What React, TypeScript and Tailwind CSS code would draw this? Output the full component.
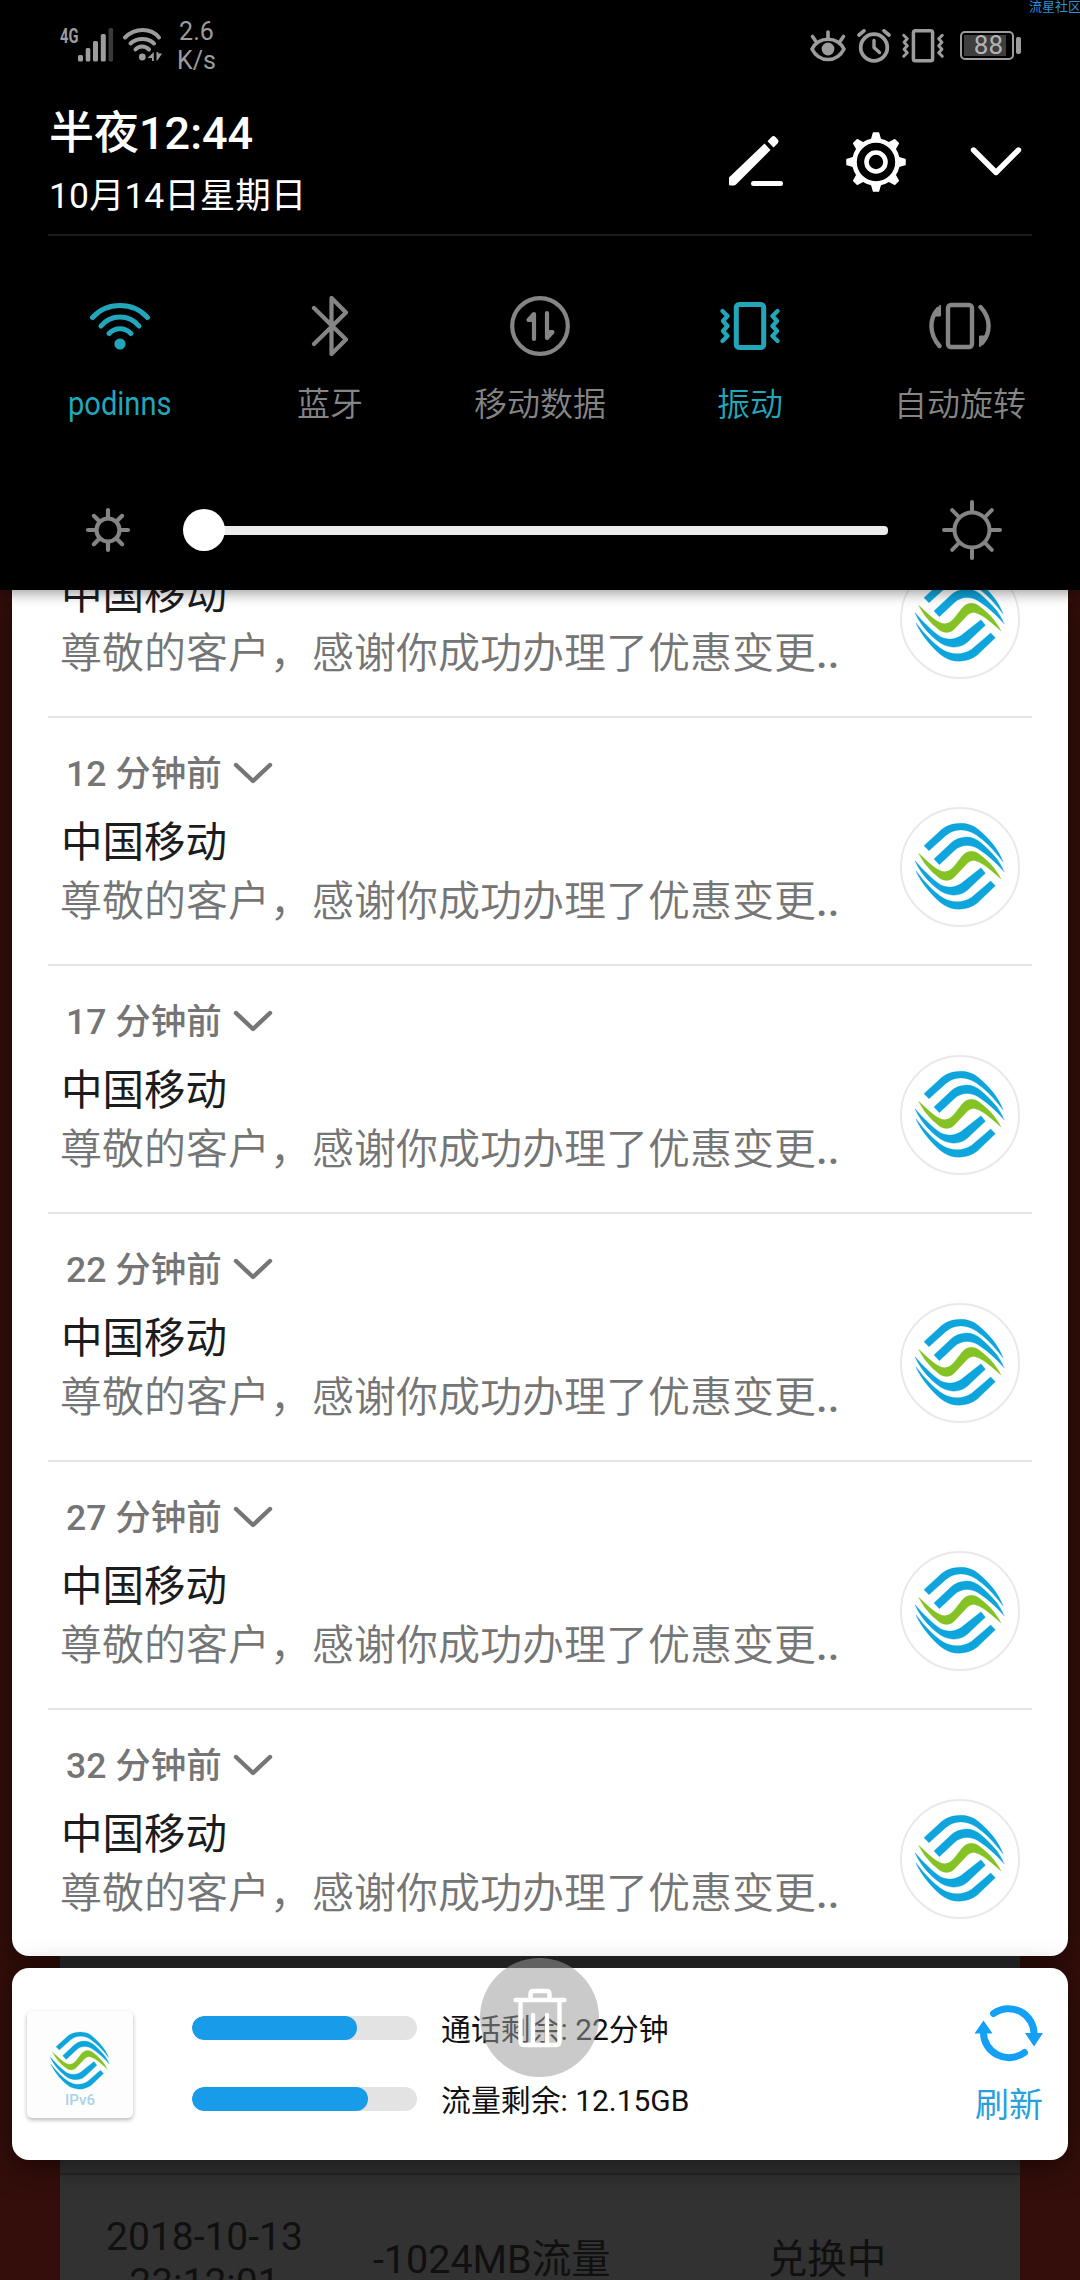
// src/App.tsx
import React from 'react'

const Logo = ({ className }: { className?: string }) => (
  <svg viewBox="30 37 360 360" className={className} strokeWidth="1" strokeLinejoin="round" aria-hidden="true">
    <g fill="#0ea5dc" stroke="#0ea5dc">
      <path d="M102 153 L150 109 C178 82 232 77 264 104 C298 132 327 166 339 202 C312 165 284 138 258 120 C227 100 190 101 166 124 L117 168 Z" />
      <path d="M132 193 L182 146 C208 122 246 120 274 145 C306 174 330 198 342 231 C315 200 290 179 264 162 C240 148 215 149 195 166 L148 210 Z" />
      <path d="M75 198 C98 224 122 249 149 269 C170 281 196 279 214 266 L273 219 L286 236 L232 287 C204 309 168 305 140 281 C110 256 88 228 75 198 Z" />
      <path d="M78 229 C102 260 130 291 160 310 C188 326 220 325 245 308 L302 259 L316 273 L262 325 C230 350 184 350 152 324 C120 297 92 262 78 229 Z" />
    </g>
    <path
      d="M86 176 C112 200 134 222 155 230 C168 234 180 228 190 218 L215 186 C230 167 250 165 267 178 C294 198 318 222 333 253 C305 228 285 210 264 201 C252 195 242 197 232 206 L197 243 C181 261 163 261 147 249 C124 232 102 208 86 176 Z"
      fill="#84c225"
      stroke="#84c225"
    />
  </svg>
)

const Vibrate = ({ className }: { className: string }) => (
  <svg viewBox="0 0 60 48" className={className} fill="none" stroke="currentColor" strokeLinecap="round" strokeLinejoin="round" aria-hidden="true">
    <rect x="16.300" y="2.500" width="27.400" height="43" rx="3" strokeWidth="5" />
    <path d="M2.500 9 7.500 14 3 19 7.500 24 3 29 7.500 34 2.500 39" strokeWidth="4.200" />
    <path d="M57.500 9 52.500 14 57 19 52.500 24 57 29 52.500 34 57.500 39" strokeWidth="4.200" />
  </svg>
)

const angles = [0, 45, 90, 135, 180, 225, 270, 315]

const Sun = ({ className, r, from, to, stroke }: { className: string; r: number; from: number; to: number; stroke: number }) => (
  <svg viewBox="-32 -32 64 64" className={className} fill="none" stroke="currentColor" strokeWidth={stroke} strokeLinecap="round" aria-hidden="true">
    <circle r={r} />
    {angles.map((a) => (
      <path key={a} d={`M0 ${-from}V${-to}`} transform={`rotate(${a})`} />
    ))}
  </svg>
)

const StatusBar = () => (
  <div className="flex h-[92px] items-start text-[#9c9c9c]">
    <div className="ml-[60px] mt-[24px] w-[20px] origin-left scale-x-[.7] text-[21px] font-bold leading-[24px]">4G</div>
    <svg className="ml-[-2px] mt-[28px] h-[34px] w-[36px]" viewBox="0 0 36 34" fill="currentColor" aria-hidden="true">
      <rect x="0" y="27" width="5" height="6.5" rx="1.5" />
      <rect x="7.7" y="20" width="4.6" height="13.5" rx="1.5" />
      <rect x="15" y="13" width="5" height="20.5" rx="1.5" />
      <rect x="22.8" y="6" width="5" height="27.5" rx="1.5" />
      <rect x="30.5" y="0" width="4.6" height="33.5" rx="1.5" fill="#3a3a3a" />
    </svg>
    <svg className="ml-[8px] mt-[28px] h-[34px] w-[42px]" viewBox="0 0 42 34" fill="none" stroke="currentColor" strokeWidth="4" strokeLinecap="round" aria-hidden="true">
      <path d="M3 9.5C13 -.5 29 -.5 37 9.5" />
      <path d="M8.5 15.5C15 9.5 26 9.5 32 15.5" />
      <path d="M13.5 21.5C17 17.5 23 17.5 27 21.5" />
      <circle cx="20.3" cy="29" r="3.4" fill="currentColor" stroke="none" />
      <path d="M31.8 24v9h-1.8v-3h-4.5zM34.5 24v9l1.6-1.5 4-6h-3.8v-1.5z" fill="currentColor" stroke="none" />
    </svg>
    <div className="ml-[13px] mt-[18px] text-center text-[25px] leading-[28.5px]">
      <div>2.6</div>
      <div>K/s</div>
    </div>

    <div className="ml-auto mr-[59px] mt-[29px] flex items-start">
      {/* eye comfort */}
      <svg className="h-[34px] w-[38px]" viewBox="0 0 38 34" fill="none" stroke="currentColor" strokeWidth="3.6" strokeLinecap="round" aria-hidden="true">
        <path d="M3 20C10 7 28 7 35 20C28 34 10 34 3 20Z" />
        <circle cx="19" cy="20" r="6.4" fill="currentColor" stroke="none" />
        <path d="M19 3V9M3.5 7.5 7 12.5M34.5 7.5 31 12.5" />
      </svg>
      {/* alarm */}
      <svg className="ml-[10px] h-[34px] w-[34px]" viewBox="0 0 34 34" fill="none" stroke="currentColor" strokeLinecap="round" aria-hidden="true">
        <circle cx="17" cy="18.5" r="13.3" strokeWidth="3.8" />
        <path d="M17 11.5V18.5L22.5 23.5" strokeWidth="3.4" />
        <path d="M2 6 7 1.8M32 6 27 1.8" strokeWidth="3.6" />
      </svg>
      <Vibrate className="ml-[11px] h-[33.6px] w-[42px]" />
      <div className="ml-[16px] mt-[2px] flex h-[29px] w-[54px] items-center rounded-[5px] border-2 border-current p-[2px]">
        <div className="flex h-[21px] w-[42px] items-center justify-end bg-[#3e3e3e] pr-[3px] text-[26px] leading-[21px] text-[#b4b4b4]">
          <span>88</span>
        </div>
      </div>
      <div className="ml-[2px] mt-[8px] h-[17px] w-[5px] rounded-[2px] bg-current" />
    </div>
  </div>
)

const ClockRow = () => (
  <div className="mx-[48px] flex h-[144px] border-b-2 border-[#1c1c1c] text-white">
    <div className="pt-[11px]">
      <div className="pl-[1px] text-[45px] font-medium leading-[62px]">半夜12:44</div>
      <div className="mt-[5px] pl-[1px] text-[35.500px] leading-[52px]">10月14日星期日</div>
    </div>
    <div className="ml-auto mr-[9px] mt-[38px] flex items-start">
      <svg className="mt-[5px] h-[54px] w-[56px]" viewBox="0 0 56 54" aria-hidden="true" fill="currentColor">
        <path d="M1 42.5 36.5 8.5 42.5 15 8 49.5Q7 50.5 5.500 50.500H2.500Q1 50.500 1 49Z" />
        <path d="M39.500 6.200 43.500 2Q45.500 0 47.500 2L49.800 4.500Q51.500 6.300 49.800 8.300L45.500 12.500Z" />
        <rect x="23" y="46" width="32" height="5" rx="2.500" />
      </svg>
      <svg className="ml-[61px] h-[64px] w-[62px]" viewBox="-31 -31 62 62" aria-hidden="true" fill="none" stroke="currentColor">
        <circle r="21.500" strokeWidth="4.600" />
        <circle r="9.500" strokeWidth="4.600" />
        {angles.map((a) => (
          <path key={a} d="M-4.500 -22 -2.500 -29H2.500L4.500 -22Z" fill="currentColor" strokeWidth="1.500" strokeLinejoin="round" transform={`rotate(${a})`} />
        ))}
      </svg>
      <svg className="ml-[62px] mt-[16px] h-[32px] w-[54px]" viewBox="0 0 54 32" aria-hidden="true" fill="none" stroke="currentColor" strokeWidth="5.400" strokeLinecap="round" strokeLinejoin="round">
        <path d="M4.500 4 27 26.500 49.500 4" />
      </svg>
    </div>
  </div>
)

const toggles = [
  {
    label: 'podinns',
    on: true,
    latin: true,
    icon: (
      <svg className="h-[60px] w-[62px]" viewBox="0 0 62 60" fill="none" stroke="currentColor" strokeWidth="5" strokeLinecap="round" aria-hidden="true">
        <path d="M3.500 21.500C18 5.500 44 5.500 58.500 21.500" />
        <path d="M12 30C22 18 40 18 50 30" />
        <path d="M20 37.500C26 31 36 31 42 37.500" />
        <circle cx="31" cy="48" r="5.600" fill="currentColor" stroke="none" />
      </svg>
    ),
  },
  {
    label: '蓝牙',
    icon: (
      <svg className="h-[60px] w-[60px]" viewBox="0 0 60 60" fill="none" stroke="currentColor" strokeWidth="4.200" strokeLinecap="round" strokeLinejoin="round" aria-hidden="true">
        <path d="M14 12 46 43.500 31.500 58V2L46 16.500 14 48" />
      </svg>
    ),
  },
  {
    label: '移动数据',
    icon: (
      <svg className="h-[60px] w-[60px]" viewBox="0 0 60 60" fill="none" stroke="currentColor" strokeWidth="4.200" strokeLinecap="round" strokeLinejoin="round" aria-hidden="true">
        <circle cx="30" cy="30" r="27.800" />
        <path d="M24 43V18L18.500 24H24M37 17V42L42.500 36H37" />
      </svg>
    ),
  },
  {
    label: '振动',
    on: true,
    icon: <Vibrate className="h-[48px] w-[60px]" />,
  },
  {
    label: '自动旋转',
    icon: (
      <svg className="h-[48px] w-[62px]" viewBox="0 0 62 48" fill="none" stroke="currentColor" strokeWidth="4.400" strokeLinecap="round" strokeLinejoin="round" aria-hidden="true">
        <rect x="19" y="3" width="24" height="42" rx="3" />
        <path d="M10.500 44C0 32 0 17 9 7M51.500 5C62 16 62 31 53 41" />
        <path d="M11 4V13.500H6.500ZM51 44V34.500H55.500Z" fill="currentColor" strokeWidth="2" />
      </svg>
    ),
  },
]

const QuickToggles = () => (
  <div className="mx-[15px] grid h-[244px] grid-cols-5 pt-[60px]">
    {toggles.map((t) => (
      <div key={t.label} className={t.on ? 'flex flex-col items-center text-[#22a7ba]' : 'flex flex-col items-center text-[#858585]'}>
        <div className="flex h-[60px] items-center">{t.icon}</div>
        <div
          className={
            t.latin
              ? 'mt-[24px] scale-x-[.88] text-[33px] font-[450] leading-[48px]'
              : 'mt-[25px] whitespace-nowrap text-[33px] font-[350] leading-[48px]'
          }
        >
          {t.label}
        </div>
      </div>
    ))}
  </div>
)

const Brightness = () => (
  <div className="flex h-[100px] items-center text-[#858585]">
    <Sun className="ml-[76px] h-[64px] w-[64px]" r={11.500} from={13} to={20} stroke={4.200} />
    <div className="ml-[43px] flex w-[705px] items-center">
      <div className="z-10 h-[42px] w-[42px] rounded-full bg-white" />
      <div className="ml-[-6px] h-[9px] flex-1 rounded-r-[4px] bg-[#ececec]" />
    </div>
    <Sun className="ml-[52px] h-[64px] w-[64px]" r={17.500} from={19} to={28} stroke={4} />
  </div>
)

const NotificationRow = ({ ago, last, first }: { ago: string; last?: boolean; first?: boolean }) => (
  <article
    className={[
      'mx-[36px] flex shrink-0 justify-between',
      last ? 'h-[246px]' : 'h-[248px] border-b-2 border-[#e4e4e4]',
      first ? 'mt-[-120px]' : '',
    ].join(' ')}
  >
    <div className="pl-[12px]">
      <div className="mt-[32px] flex h-[48px] items-center pl-[6px] text-[35.500px] font-medium leading-[48px] text-[#757575]">
        <span>{ago}</span>
        <svg className="ml-[11px] mt-[-2px] h-[22px] w-[40px]" viewBox="0 0 40 22" fill="none" stroke="currentColor" strokeWidth="4.400" strokeLinecap="round" strokeLinejoin="round" aria-hidden="true">
          <path d="M3 3 20 19 37 3" />
        </svg>
      </div>
      <div className="mt-[15px] h-[60px] pl-[1px] text-[41.500px] leading-[60px] text-[#1c1c1c]">中国移动</div>
      <div className="mt-[-1px] h-[60px] whitespace-nowrap text-[42px] font-[350] leading-[60px] text-[#757575]">
        尊敬的客户，感谢你成功办理了优惠变更<span className="font-medium">..</span>
      </div>
    </div>
    <div className="mr-[12px] mt-[89px] h-[120px] w-[120px] shrink-0 overflow-hidden rounded-full border-2 border-[#e9e9e9] bg-white">
      <Logo className="m-[-2px] h-[120px] w-[120px] max-w-none" />
    </div>
  </article>
)

const agoList = ['7 分钟前', '12 分钟前', '17 分钟前', '22 分钟前', '27 分钟前', '32 分钟前']

const usage = [
  { label: '通话剩余: 22分钟', value: 73.3 },
  { label: '流量剩余: 12.15GB', value: 78.2 },
]

const UsageCard = () => (
  <section className="mx-[12px] mt-[12px] flex h-[192px] rounded-[17px] bg-white shadow-[0_6px_30px_rgba(0,0,0,.5)]">
    <div className="ml-[15px] mt-[43px] flex h-[107px] w-[106px] flex-col items-center rounded-[5px] bg-[#fdfdfd] shadow-[0_2px_4px_rgba(0,0,0,.28)]">
      <Logo className="mt-[10px] h-[80px] w-[80px]" />
      <div className="mt-[-9px] text-[15px] font-medium leading-[16px] text-[#a9d2e6]">IPv6</div>
    </div>
    <div className="ml-[59px] mt-[38px]">
      {usage.map((u) => (
        <div key={u.label} className="mb-[23px] flex h-[48px]">
          <div className="mt-[10px] h-[24px] w-[225px] overflow-hidden rounded-full bg-[#e3e3e3]">
            <div className="h-full rounded-full bg-[#189be8]" style={{ width: `${u.value}%` }} />
          </div>
          <div className="ml-[24px] whitespace-nowrap text-[29.900px] leading-[48px] text-[#111]">{u.label}</div>
        </div>
      ))}
    </div>
    <div className="ml-auto mr-[24px] mt-[37px] flex flex-col items-center">
      <svg className="h-[58px] w-[70px]" viewBox="0 0 70 58" fill="none" stroke="#14a0f4" strokeWidth="7" strokeLinecap="round" aria-hidden="true">
        <path d="M19.500 8.500A25.500 25 0 0 1 60 30" />
        <path d="M50.500 47.500A25.500 25 0 0 1 9.500 27" />
        <path d="M51 28H69L60 41.500ZM.5 28.500H18.500L9.500 15.500Z" fill="#14a0f4" stroke="none" />
      </svg>
      <div className="mt-[18px] text-[34px] leading-[48px] text-[#2b9fdc]">刷新</div>
    </div>
  </section>
)

// page of the app that stays visible, dimmed, under the shade
const DimmedPage = () => (
  <div className="absolute inset-0 flex bg-[#330e0a] px-[60px]">
    <div className="flex w-full flex-col bg-[#323232]">
      <div className="h-[2175px] shrink-0 border-b-2 border-[#262626]" />
      <div className="flex text-[39px] leading-[46px] text-[#101010]">
        <div className="ml-[46px] mt-[39px] text-center">
          <div>2018-10-13</div>
          <div>23:12:01</div>
        </div>
        <div className="ml-[70px] mt-[62px] whitespace-nowrap text-[39.500px]">-1024MB流量</div>
        <div className="ml-[157px] mt-[62px] text-[39.500px]">兑换中</div>
      </div>
    </div>
  </div>
)

export default function App() {
  return (
    <main className="relative h-[2280px] w-[1080px] overflow-hidden bg-black font-['Roboto','Noto_Sans_CJK_SC',sans-serif]">
      <DimmedPage />

      <div className="relative flex flex-col">
        <header className="relative z-10 h-[590px] bg-black shadow-[0_2px_14px_rgba(0,0,0,.45)]">
          <StatusBar />
          <ClockRow />
          <QuickToggles />
          <Brightness />
        </header>

        <section className="mx-[12px] flex h-[1366px] flex-col overflow-hidden rounded-b-[17px] bg-white shadow-[0_6px_30px_rgba(0,0,0,.5)]">
          {agoList.map((ago, i) => (
            <NotificationRow key={ago} ago={ago} first={i === 0} last={i === agoList.length - 1} />
          ))}
        </section>

        <UsageCard />
      </div>

      {/* clear-all button floats over the cards */}
      <button className="absolute left-[480px] top-[1958px] z-20 flex h-[119px] w-[119px] items-center justify-center rounded-full bg-[#9a9a9a]/[.53]" aria-label="清除">
        <svg className="h-[60px] w-[54px]" viewBox="0 0 54 60" fill="none" stroke="#fff" strokeWidth="4.400" strokeLinecap="round" strokeLinejoin="round" aria-hidden="true">
          <path d="M2.500 12H51.500M17.500 11V6Q17.500 3 20.500 3H33.500Q36.500 3 36.500 6V11" />
          <path d="M7.500 13V53.500Q7.500 57 11 57H43Q46.500 57 46.500 53.500V13M20 27V56M34 27V56" />
        </svg>
      </button>

      <div className="absolute right-[-1px] top-0 z-20 whitespace-nowrap text-[13px] leading-[13px] text-[#2f8fd6]">流星社区</div>
    </main>
  )
}
